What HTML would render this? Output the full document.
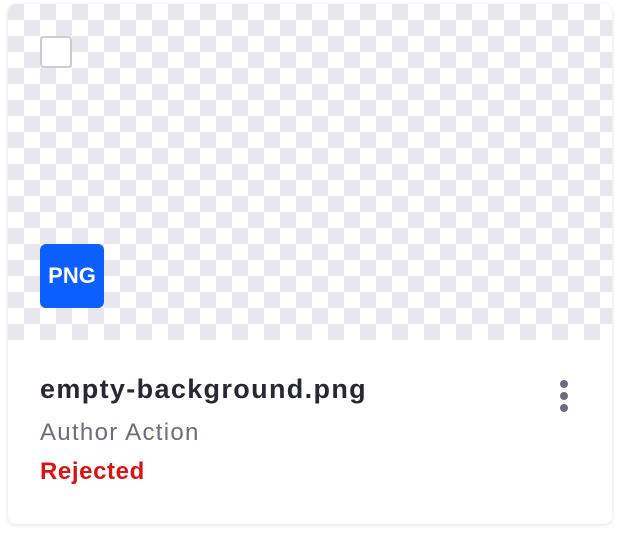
<!DOCTYPE html>
<html><head><style>
html,body{margin:0;padding:0;background:#fff;width:620px;height:536px;overflow:hidden;font-family:"Liberation Sans",sans-serif}
.card{position:absolute;left:8px;top:4px;width:604px;height:520px;border-radius:8px;background:#fff;box-shadow:0 1px 4px rgba(0,0,0,0.12);overflow:hidden}
.img{position:absolute;left:0;top:0;width:604px;height:336px;background-color:#fff;
background-image:linear-gradient(45deg,#e7e7ed 25%,transparent 25%,transparent 75%,#e7e7ed 75%),linear-gradient(45deg,#e7e7ed 25%,transparent 25%,transparent 75%,#e7e7ed 75%);
background-size:32px 32px;background-position:16px 0,0 16px}
.cb{position:absolute;left:32px;top:32px;width:28px;height:28px;border:2px solid #cdcad8;border-radius:4px;background:#fff}
.png{position:absolute;left:32px;top:240px;width:64px;height:64px;border-radius:6px;background:#0b5fff;color:#fff;font-weight:bold;font-size:22px;line-height:64px;text-align:center}
.t1{position:absolute;left:40px;top:374px;font-size:27px;font-weight:bold;color:#272833;letter-spacing:1.35px}
.t2{position:absolute;left:40px;top:419px;font-size:24px;color:#6b6c7e;letter-spacing:1.3px}
.t3{position:absolute;left:40px;top:458px;font-size:24px;font-weight:bold;color:#da1414;letter-spacing:0.6px}
.dot{position:absolute;width:8px;height:8px;border-radius:50%;background:#6b6c7e}
</style></head><body>
<div class="card">
<div class="img"></div>
<div class="cb"></div>
<div class="png">PNG</div>
</div>
<div class="t1">empty-background.png</div>
<div class="t2">Author Action</div>
<div class="t3">Rejected</div>
<div class="dot" style="left:560px;top:380px"></div>
<div class="dot" style="left:560px;top:392px"></div>
<div class="dot" style="left:560px;top:404px"></div>
</body></html>
